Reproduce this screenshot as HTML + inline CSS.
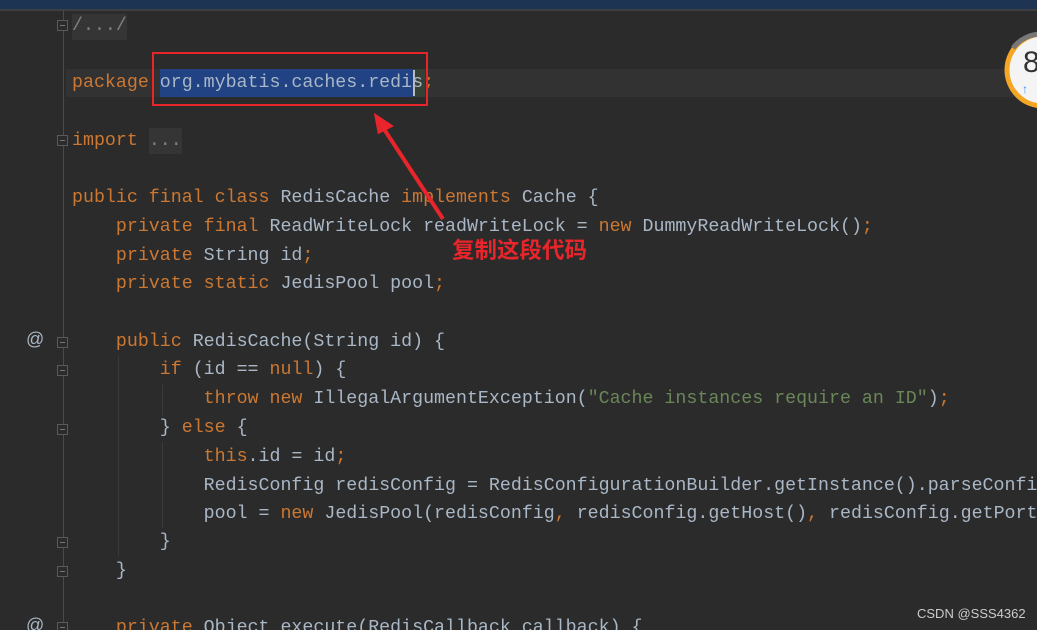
<!DOCTYPE html>
<html><head><meta charset="utf-8"><style>
html,body{margin:0;width:1037px;height:630px;overflow:hidden;}
body{background:#2b2b2b;font-family:"Liberation Mono",monospace;}
#w{position:absolute;left:0;top:0;width:1037px;height:630px;overflow:hidden;}
.top{position:absolute;left:0;top:0;width:1037px;height:9px;background:#1d3452;border-bottom:2px solid #3c3f41;}
.cur{position:absolute;left:66px;top:69px;width:971px;height:28px;background:#323232;}
.l{position:absolute;left:72px;font-size:18.3px;line-height:28px;white-space:pre;color:#a9b7c6;}
.k{color:#cc7832}.s{color:#6a8759}.g{color:#808080}
.fold{position:absolute;left:63px;top:10px;width:1px;height:620px;background:#4a4a4a;}
.fb{position:absolute;left:57px;width:11px;height:11px;border:1px solid #5a5a5a;background:#2b2b2b;box-sizing:border-box;}
.fb:after{content:"";position:absolute;left:2px;top:4px;width:5px;height:1px;background:#777;}
.at{position:absolute;left:26px;font-size:18px;color:#a9b7c6;font-family:"Liberation Sans",sans-serif;}
.ig{position:absolute;width:1px;background:#3b3b3b;}
</style></head><body><div id="w">
<div class="top"></div>
<div class="cur"></div>
<div class="fold"></div>
<div class="ig" style="left:118px;top:356px;height:200px"></div>
<div class="ig" style="left:162px;top:385px;height:30px"></div>
<div class="ig" style="left:162px;top:442px;height:86px"></div>
<div style="position:absolute;left:72px;top:14px;width:55px;height:26px;background:#353535"></div>
<div style="position:absolute;left:149px;top:128px;width:33px;height:26px;background:#353535"></div>
<div style="position:absolute;left:160px;top:69px;width:254px;height:28px;background:#214283"></div>
<div style="position:absolute;left:414px;top:69px;width:11px;height:28px;background:#344134"></div>
<div style="position:absolute;left:413px;top:70px;width:2px;height:26px;background:#bbb"></div>
<div class="fb" style="top:20px"></div>
<div class="fb" style="top:135px"></div>
<div class="fb" style="top:337px"></div>
<div class="fb" style="top:365px"></div>
<div class="fb" style="top:424px"></div>
<div class="fb" style="top:537px"></div>
<div class="fb" style="top:566px"></div>
<div class="fb" style="top:622px"></div>
<div class="at" style="top:329px">@</div>
<div class="at" style="top:615px">@</div>
<div class="l g" style="top:12px">/.../</div>
<div class="l" style="top:69px"><span class="k">package</span> org.mybatis.caches.redis<span class="k">;</span></div>
<div class="l" style="top:127px"><span class="k">import</span> <span class="g">...</span></div>
<div class="l" style="top:184px"><span class="k">public final class</span> RedisCache <span class="k">implements</span> Cache {</div>
<div class="l" style="top:213px">    <span class="k">private final</span> ReadWriteLock readWriteLock = <span class="k">new</span> DummyReadWriteLock()<span class="k">;</span></div>
<div class="l" style="top:242px">    <span class="k">private</span> String id<span class="k">;</span></div>
<div class="l" style="top:270px">    <span class="k">private static</span> JedisPool pool<span class="k">;</span></div>
<div class="l" style="top:328px">    <span class="k">public</span> RedisCache(String id) {</div>
<div class="l" style="top:356px">        <span class="k">if</span> (id == <span class="k">null</span>) {</div>
<div class="l" style="top:385px">            <span class="k">throw new</span> IllegalArgumentException(<span class="s">"Cache instances require an ID"</span>)<span class="k">;</span></div>
<div class="l" style="top:414px">        } <span class="k">else</span> {</div>
<div class="l" style="top:443px">            <span class="k">this</span>.id = id<span class="k">;</span></div>
<div class="l" style="top:472px">            RedisConfig redisConfig = RedisConfigurationBuilder.getInstance().parseConfi</div>
<div class="l" style="top:500px">            pool = <span class="k">new</span> JedisPool(redisConfig<span class="k">,</span> redisConfig.getHost()<span class="k">,</span> redisConfig.getPort</div>
<div class="l" style="top:528px">        }</div>
<div class="l" style="top:557px">    }</div>
<div class="l" style="top:614px">    <span class="k">private</span> Object execute(RedisCallback callback) {</div>
<div style="position:absolute;left:152px;top:52px;width:276px;height:54px;border:2.5px solid #e8252a;box-sizing:border-box"></div>
<svg style="position:absolute;left:0;top:0" width="1037" height="630">
<line x1="443" y1="219" x2="382" y2="126" stroke="#e8252a" stroke-width="4"/>
<polygon points="376,116 391,126 379,132" fill="#e8252a" stroke="#e8252a" stroke-width="3"/>
<circle cx="1043" cy="70" r="36" fill="#f4f4f4" stroke="#f5a623" stroke-width="5"/>
<path d="M1013 48 A36 36 0 0 1 1043 34" stroke="#777" stroke-width="5" fill="none"/>
<text x="1023" y="72" font-family="Liberation Sans" font-size="30" fill="#333">8</text>
<text x="1022" y="93" font-family="Liberation Sans" font-size="12" fill="#3a8fff">↑</text>
</svg>
<div style="position:absolute;left:452px;top:233px;font-family:'Liberation Sans','Noto Sans CJK SC',sans-serif;font-size:22.5px;font-weight:bold;color:#e8252a;white-space:nowrap">复制这段代码</div>
<div style="position:absolute;left:917px;top:606px;font-family:'Liberation Sans',sans-serif;font-size:13px;color:#ccc;white-space:nowrap">CSDN @SSS4362</div>
</div></body></html>
